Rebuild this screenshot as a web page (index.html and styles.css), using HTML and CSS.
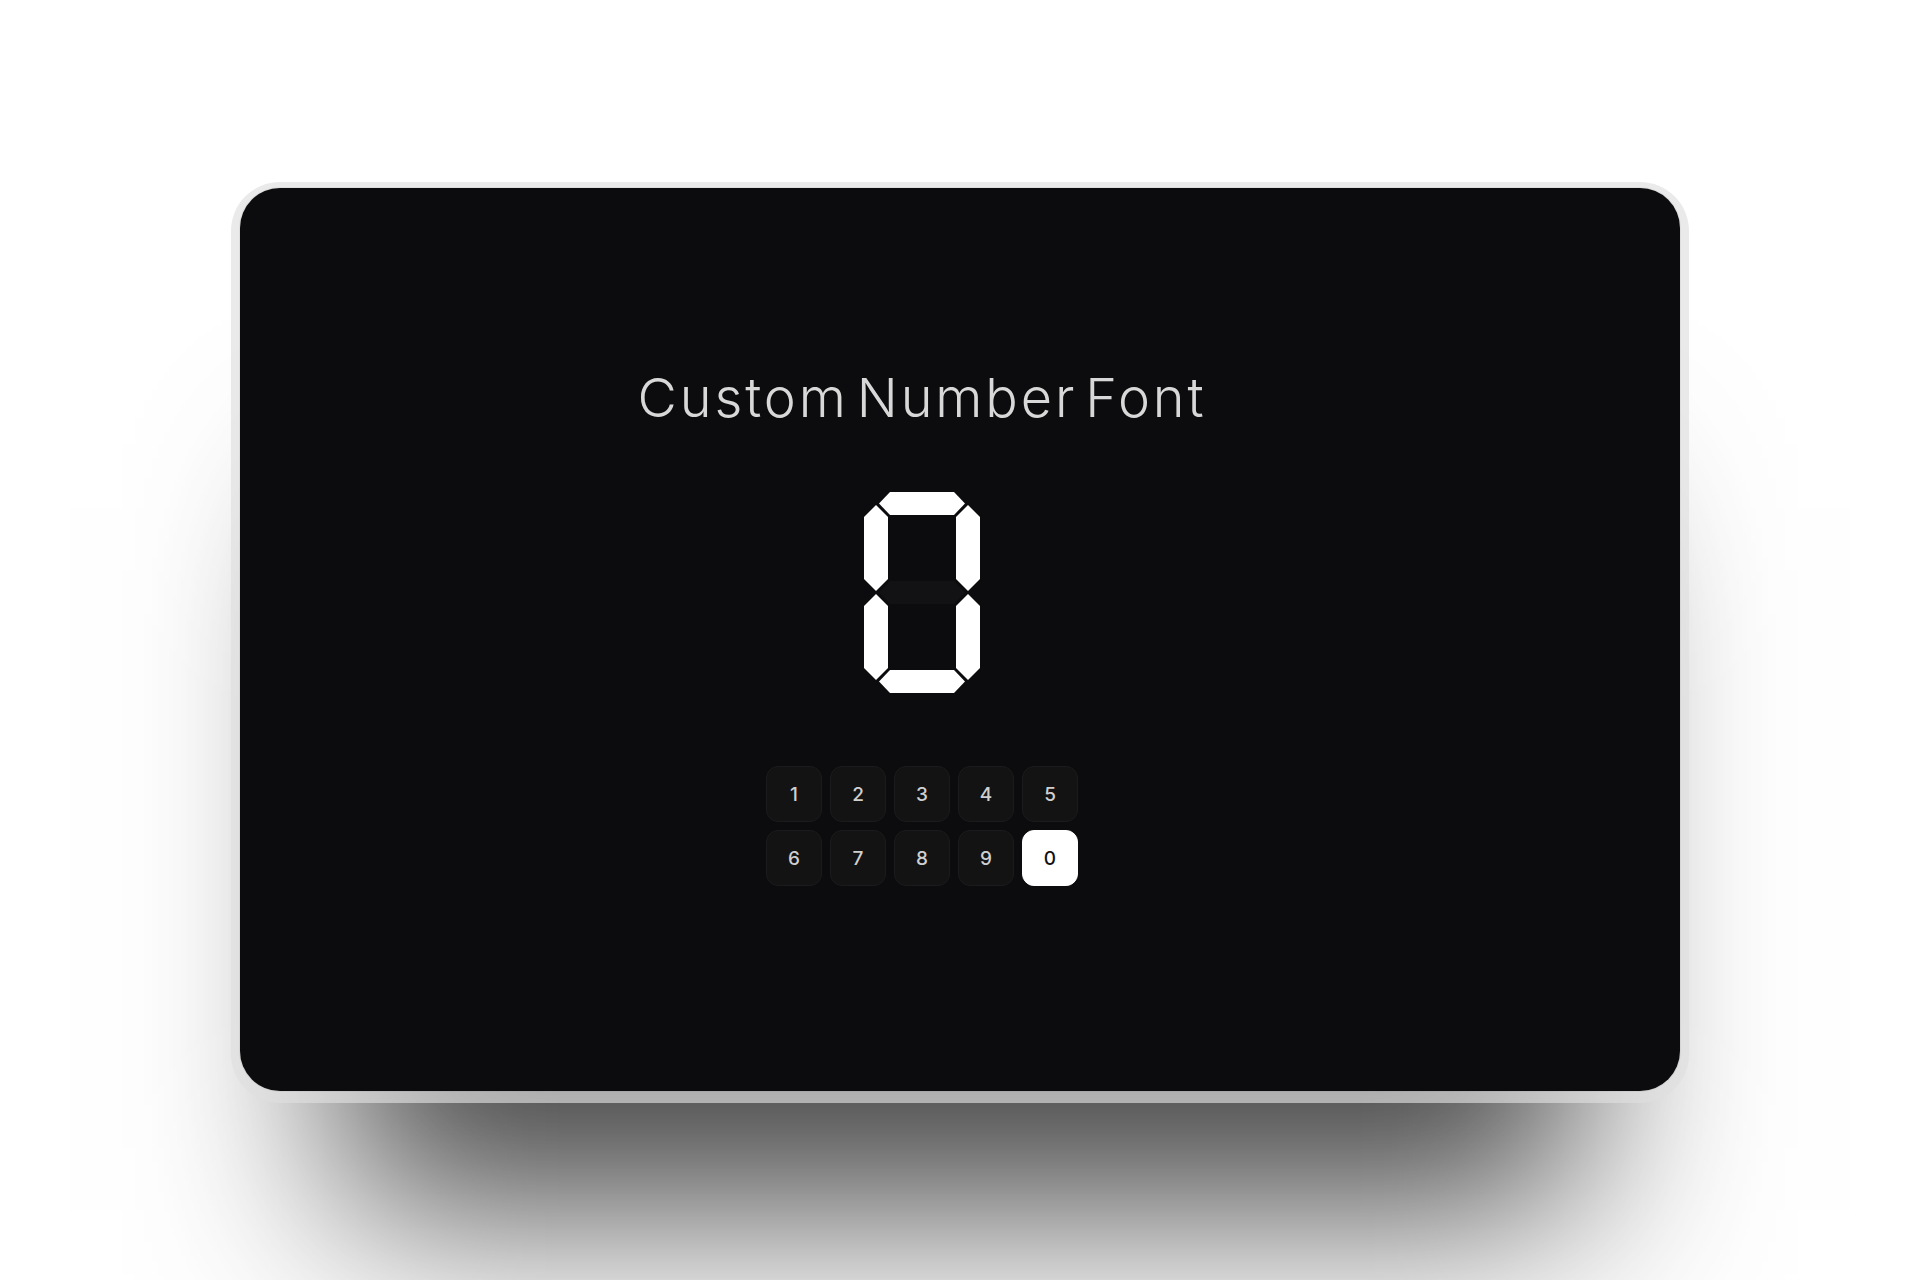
FILE: index.html
```html
<!DOCTYPE html>
<html lang="en">
<head>
<meta charset="utf-8">
<title>Custom Number Font</title>
<link rel="stylesheet" href="styles.css">
</head>
<body>
<main class="card">
  <h1 class="title">Custom Number Font</h1>
  <svg class="digit" width="116" height="201" viewBox="0 0 116 201" aria-label="0">
    <polygon class="seg on" points="26,0 90,0 101,11.5 90,23 26,23 15,11.5"/>
    <polygon class="seg on" points="12,13 24,25 24,87 12,99 0,87 0,25"/>
    <polygon class="seg on" points="104,13 116,25 116,87 104,99 92,87 92,25"/>
    <polygon class="seg off" points="26,89 90,89 101,100.5 90,112 26,112 15,100.5"/>
    <polygon class="seg on" points="12,102 24,114 24,176 12,188 0,176 0,114"/>
    <polygon class="seg on" points="104,102 116,114 116,176 104,188 92,176 92,114"/>
    <polygon class="seg on" points="26,178 90,178 101,189.5 90,201 26,201 15,189.5"/>
  </svg>
  <div class="keys">
    <button class="key">1</button>
    <button class="key">2</button>
    <button class="key">3</button>
    <button class="key">4</button>
    <button class="key">5</button>
    <button class="key">6</button>
    <button class="key">7</button>
    <button class="key">8</button>
    <button class="key">9</button>
    <button class="key active">0</button>
  </div>
</main>
</body>
</html>
```
FILE: styles.css
```css
html, body {
  margin: 0;
  background: #ffffff;
}
body {
  min-height: 1280px;
  padding-top: 188px;
  box-sizing: border-box;
  display: flex;
  justify-content: center;
  align-items: flex-start;
  overflow: hidden;
}
.card {
  width: 1440px;
  height: 903px;
  box-sizing: border-box;
  padding: 178px 76px 0 0;
  background: #0c0c0e;
  border-radius: 40px;
  display: flex;
  flex-direction: column;
  align-items: center;
  box-shadow:
    0 0 0 1px rgba(0, 0, 0, 0.05),
    0 3px 0 9px rgba(222, 222, 222, 0.65),
    0 220px 180px -100px rgba(0, 0, 0, 0.72);
}
.title {
  margin: 0;
  font-family: "Inter", "Liberation Sans", sans-serif;
  font-weight: 300;
  font-size: 54px;
  line-height: 64px;
  color: #d8d8d8;
  letter-spacing: 2.9px;
  word-spacing: -10px;
}
.digit {
  display: block;
  margin-top: 62px;
}
.seg.on { fill: #ffffff; }
.seg.off { fill: #121214; }
.keys {
  margin-top: 73px;
  display: grid;
  grid-template-columns: repeat(5, 56px);
  grid-auto-rows: 56px;
  gap: 8px;
}
.key {
  margin: 0;
  padding: 0;
  border: 1px solid #1b1b1d;
  border-radius: 12px;
  background: #131314;
  color: #cfcfcf;
  font-family: "Inter", "Liberation Sans", sans-serif;
  font-size: 19px;
  font-weight: 500;
  display: flex;
  align-items: center;
  justify-content: center;
}
.key.active {
  background: #ffffff;
  border-color: #ffffff;
  color: #111113;
}
```
